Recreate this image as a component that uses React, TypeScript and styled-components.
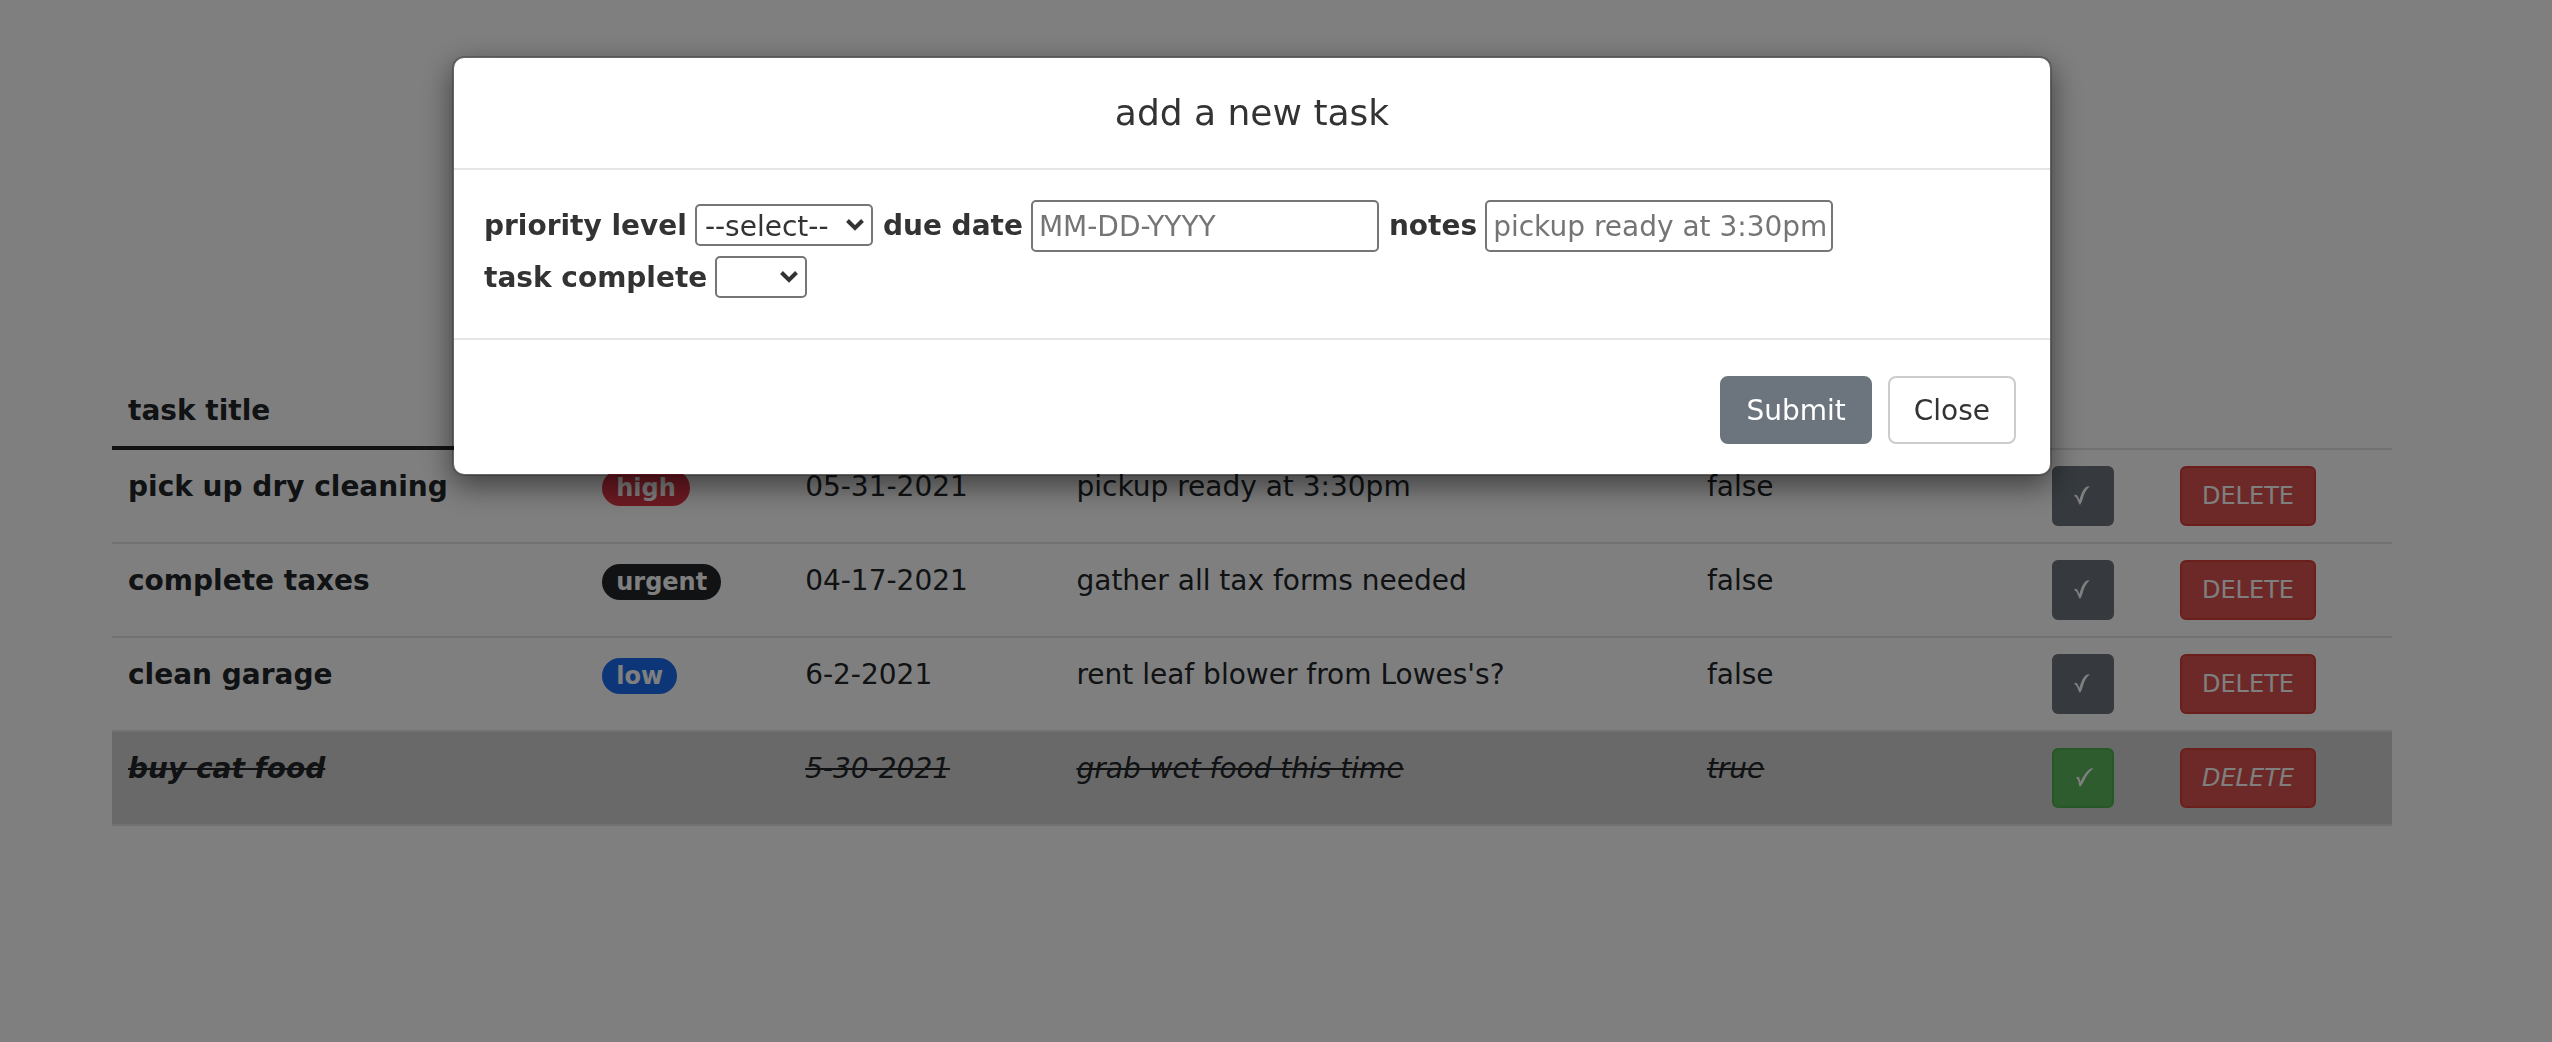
import React from 'react';
import styled, { createGlobalStyle, css } from 'styled-components';

const GlobalStyle = createGlobalStyle`
  *, *::before, *::after { box-sizing: border-box; }
  html, body { margin: 0; min-height: 100%; background: #fff; }
  body {
    padding-right: 48px;
    font-family: Verdana, "DejaVu Sans", sans-serif;
    font-size: 28px;
    line-height: 40px;
    color: #212529;
  }
  button, input, select { font-family: inherit; margin: 0; }
`;

const Page = styled.main`
  max-width: 2280px;
  margin: 0 auto;
  padding-top: 374px;
`;

const TaskTable = styled.table`
  width: 100%;
  table-layout: fixed;
  border-collapse: separate;
  border-spacing: 0;
`;

const Column = styled.col<{ $share: number }>`
  width: ${(p) => p.$share}%;
`;

const HeadCell = styled.th`
  padding: 17px 16px 15px;
  border-bottom: 4px solid #212529;
  text-align: left;
  vertical-align: bottom;
`;

const BlankHeadCell = styled.td`
  border-bottom: 2px solid #dee2e6;
`;

const Row = styled.tr<{ $done?: boolean }>`
  ${(p) => p.$done && css`
    background: #d3d3d3;
    font-style: italic;
  `}
  & > th, & > td {
    padding: 16px;
    border-bottom: 2px solid #dee2e6;
    text-align: left;
    vertical-align: top;
  }
`;

const Words = styled.span<{ $done?: boolean }>`
  display: block;
  line-height: 42px;
  text-decoration: ${(p) => (p.$done ? 'line-through' : 'none')};
`;

const Badge = styled.span<{ $color: string }>`
  display: inline-block;
  padding: 6px 14px;
  border-radius: 20px;
  background: ${(p) => p.$color};
  color: #fff;
  font-size: 24px;
  font-weight: 700;
  line-height: 24px;
  vertical-align: middle;
`;

const RowButton = styled.button<{ $fill: string; $edge: string }>`
  display: block;
  height: 60px;
  padding: 0 20px;
  border: 2px solid ${(p) => p.$edge};
  border-radius: 6px;
  background: ${(p) => p.$fill};
  color: #fff;
  font-size: 24px;
  font-style: inherit;
  line-height: 36px;
`;

const CheckMark = styled.svg`
  display: block;
  width: 18px;
  height: 20px;
  overflow: visible;
`;

const Backdrop = styled.div`
  position: fixed;
  inset: 0;
  padding: 56px 48px 56px 0;
  background: rgba(0, 0, 0, 0.5);
`;

const Dialog = styled.section`
  max-width: 1600px;
  margin: 0 auto;
  border: 2px solid rgba(0, 0, 0, 0.2);
  border-radius: 12px;
  background: #fff;
  background-clip: padding-box;
  box-shadow: 0 10px 30px rgba(0, 0, 0, 0.5);
  color: #333;
`;

const DialogHeader = styled.header`
  padding: 30px;
  border-bottom: 2px solid #e5e5e5;
`;

const DialogTitle = styled.h1`
  margin: 0;
  font-size: 36px;
  font-weight: 400;
  line-height: 50px;
  text-align: center;
`;

const DialogForm = styled.form`
  display: flex;
  flex-wrap: wrap;
  align-items: center;
  column-gap: 10px;
  padding: 30px 200px 34px 30px;
`;

const Field = styled.label`
  display: flex;
  align-items: center;
  gap: 8px;
  height: 52px;
  font-weight: 700;
`;

const TextInput = styled.input`
  width: 348px;
  height: 52px;
  padding: 2px 6px;
  border: 2px solid #767676;
  border-radius: 5px;
  background: #fff;
  font-size: 28px;
  &::placeholder { color: #757575; opacity: 1; }
`;

const SelectWrap = styled.span`
  position: relative;
  display: flex;
  margin-bottom: 2px;
`;

const Select = styled.select<{ $width: number }>`
  appearance: none;
  width: ${(p) => p.$width}px;
  height: 42px;
  padding: 2px 8px 0;
  border: 2px solid #767676;
  border-radius: 5px;
  background: #fff;
  color: #333;
  font-size: 28px;
`;

const Arrow = styled.svg`
  position: absolute;
  top: 14px;
  right: 8px;
  width: 20px;
  height: 14px;
  pointer-events: none;
`;

const DialogFooter = styled.footer`
  display: flex;
  justify-content: flex-end;
  gap: 16px;
  padding: 36px 34px 30px;
  border-top: 2px solid #e5e5e5;
`;

const DialogButton = styled.button<{ $primary?: boolean }>`
  height: 68px;
  padding: 2px 24px 0;
  border: 2px solid ${(p) => (p.$primary ? '#6c757d' : '#ccc')};
  border-radius: 8px;
  background: ${(p) => (p.$primary ? '#6c757d' : '#fff')};
  color: ${(p) => (p.$primary ? '#fff' : '#333')};
  font-size: 28px;
  line-height: 40px;
`;

const columns = [20.8, 8.9, 11.9, 27.65, 15.15, 5.6, 10];
const hiddenHeads = ['priority level', 'due date', 'notes', 'task complete'];

const tasks = [
  { title: 'pick up dry cleaning', level: 'high', color: '#dc3545', due: '05-31-2021', notes: 'pickup ready at 3:30pm', done: false },
  { title: 'complete taxes', level: 'urgent', color: '#212529', due: '04-17-2021', notes: 'gather all tax forms needed', done: false },
  { title: 'clean garage', level: 'low', color: '#1a6df0', due: '6-2-2021', notes: "rent leaf blower from Lowes's?", done: false },
  { title: 'buy cat food', level: '', color: '', due: '5-30-2021', notes: 'grab wet food this time', done: true },
];

function Check({ slanted }: { slanted: boolean }) {
  return (
    <CheckMark viewBox="0 0 54 60" aria-hidden="true">
      <path
        d="M0 30Q5 24 9 28Q13 33 16 42Q24 12 36 3Q41 0 47 1Q32 16 27 36Q24 48 18 57Q14 52 12 46Q7 31 0 30Z"
        fill="#fff"
        transform={slanted ? 'translate(12 0) skewX(-12)' : undefined}
      />
    </CheckMark>
  );
}

function SelectBox({ width, options }: { width: number; options: string[] }) {
  return (
    <SelectWrap>
      <Select $width={width}>
        {options.map((o) => <option key={o}>{o}</option>)}
      </Select>
      <Arrow viewBox="0 0 20 14" aria-hidden="true">
        <path d="M2.5 2.5 10 10 17.5 2.5" fill="none" stroke="#333" strokeWidth="4" />
      </Arrow>
    </SelectWrap>
  );
}

export default function App() {
  return (
    <>
      <GlobalStyle />
      <Page>
        <TaskTable>
          <colgroup>
            {columns.map((share, i) => <Column key={i} $share={share} />)}
          </colgroup>
          <thead>
            <tr>
              <HeadCell scope="col">task title</HeadCell>
              {hiddenHeads.map((name) => <HeadCell key={name} scope="col" aria-label={name} />)}
              <BlankHeadCell />
              <BlankHeadCell />
            </tr>
          </thead>
          <tbody>
            {tasks.map((t) => (
              <Row key={t.title} $done={t.done}>
                <th scope="row"><Words $done={t.done}>{t.title}</Words></th>
                <td>{t.level && <Words><Badge $color={t.color}>{t.level}</Badge></Words>}</td>
                <td><Words $done={t.done}>{t.due}</Words></td>
                <td><Words $done={t.done}>{t.notes}</Words></td>
                <td><Words $done={t.done}>{String(t.done)}</Words></td>
                <td>
                  <RowButton
                    type="button"
                    aria-label="toggle complete"
                    $fill={t.done ? '#5cb85c' : '#6c757d'}
                    $edge={t.done ? '#4cae4c' : '#6c757d'}
                  >
                    <Check slanted={t.done} />
                  </RowButton>
                </td>
                <td><RowButton type="button" $fill="#d9534f" $edge="#d43f3a">DELETE</RowButton></td>
              </Row>
            ))}
          </tbody>
        </TaskTable>
      </Page>
      <Backdrop>
        <Dialog role="dialog" aria-labelledby="dialog-title">
          <DialogHeader><DialogTitle id="dialog-title">add a new task</DialogTitle></DialogHeader>
          <DialogForm id="task-form">
            <Field>priority level <SelectBox width={178} options={['--select--', 'low', 'high', 'urgent']} /></Field>
            <Field>due date <TextInput type="text" placeholder="MM-DD-YYYY" /></Field>
            <Field>notes <TextInput type="text" placeholder="pickup ready at 3:30pm" /></Field>
            <Field>task complete <SelectBox width={92} options={['', 'true', 'false']} /></Field>
          </DialogForm>
          <DialogFooter>
            <DialogButton $primary type="submit" form="task-form">Submit</DialogButton>
            <DialogButton type="button">Close</DialogButton>
          </DialogFooter>
        </Dialog>
      </Backdrop>
    </>
  );
}
